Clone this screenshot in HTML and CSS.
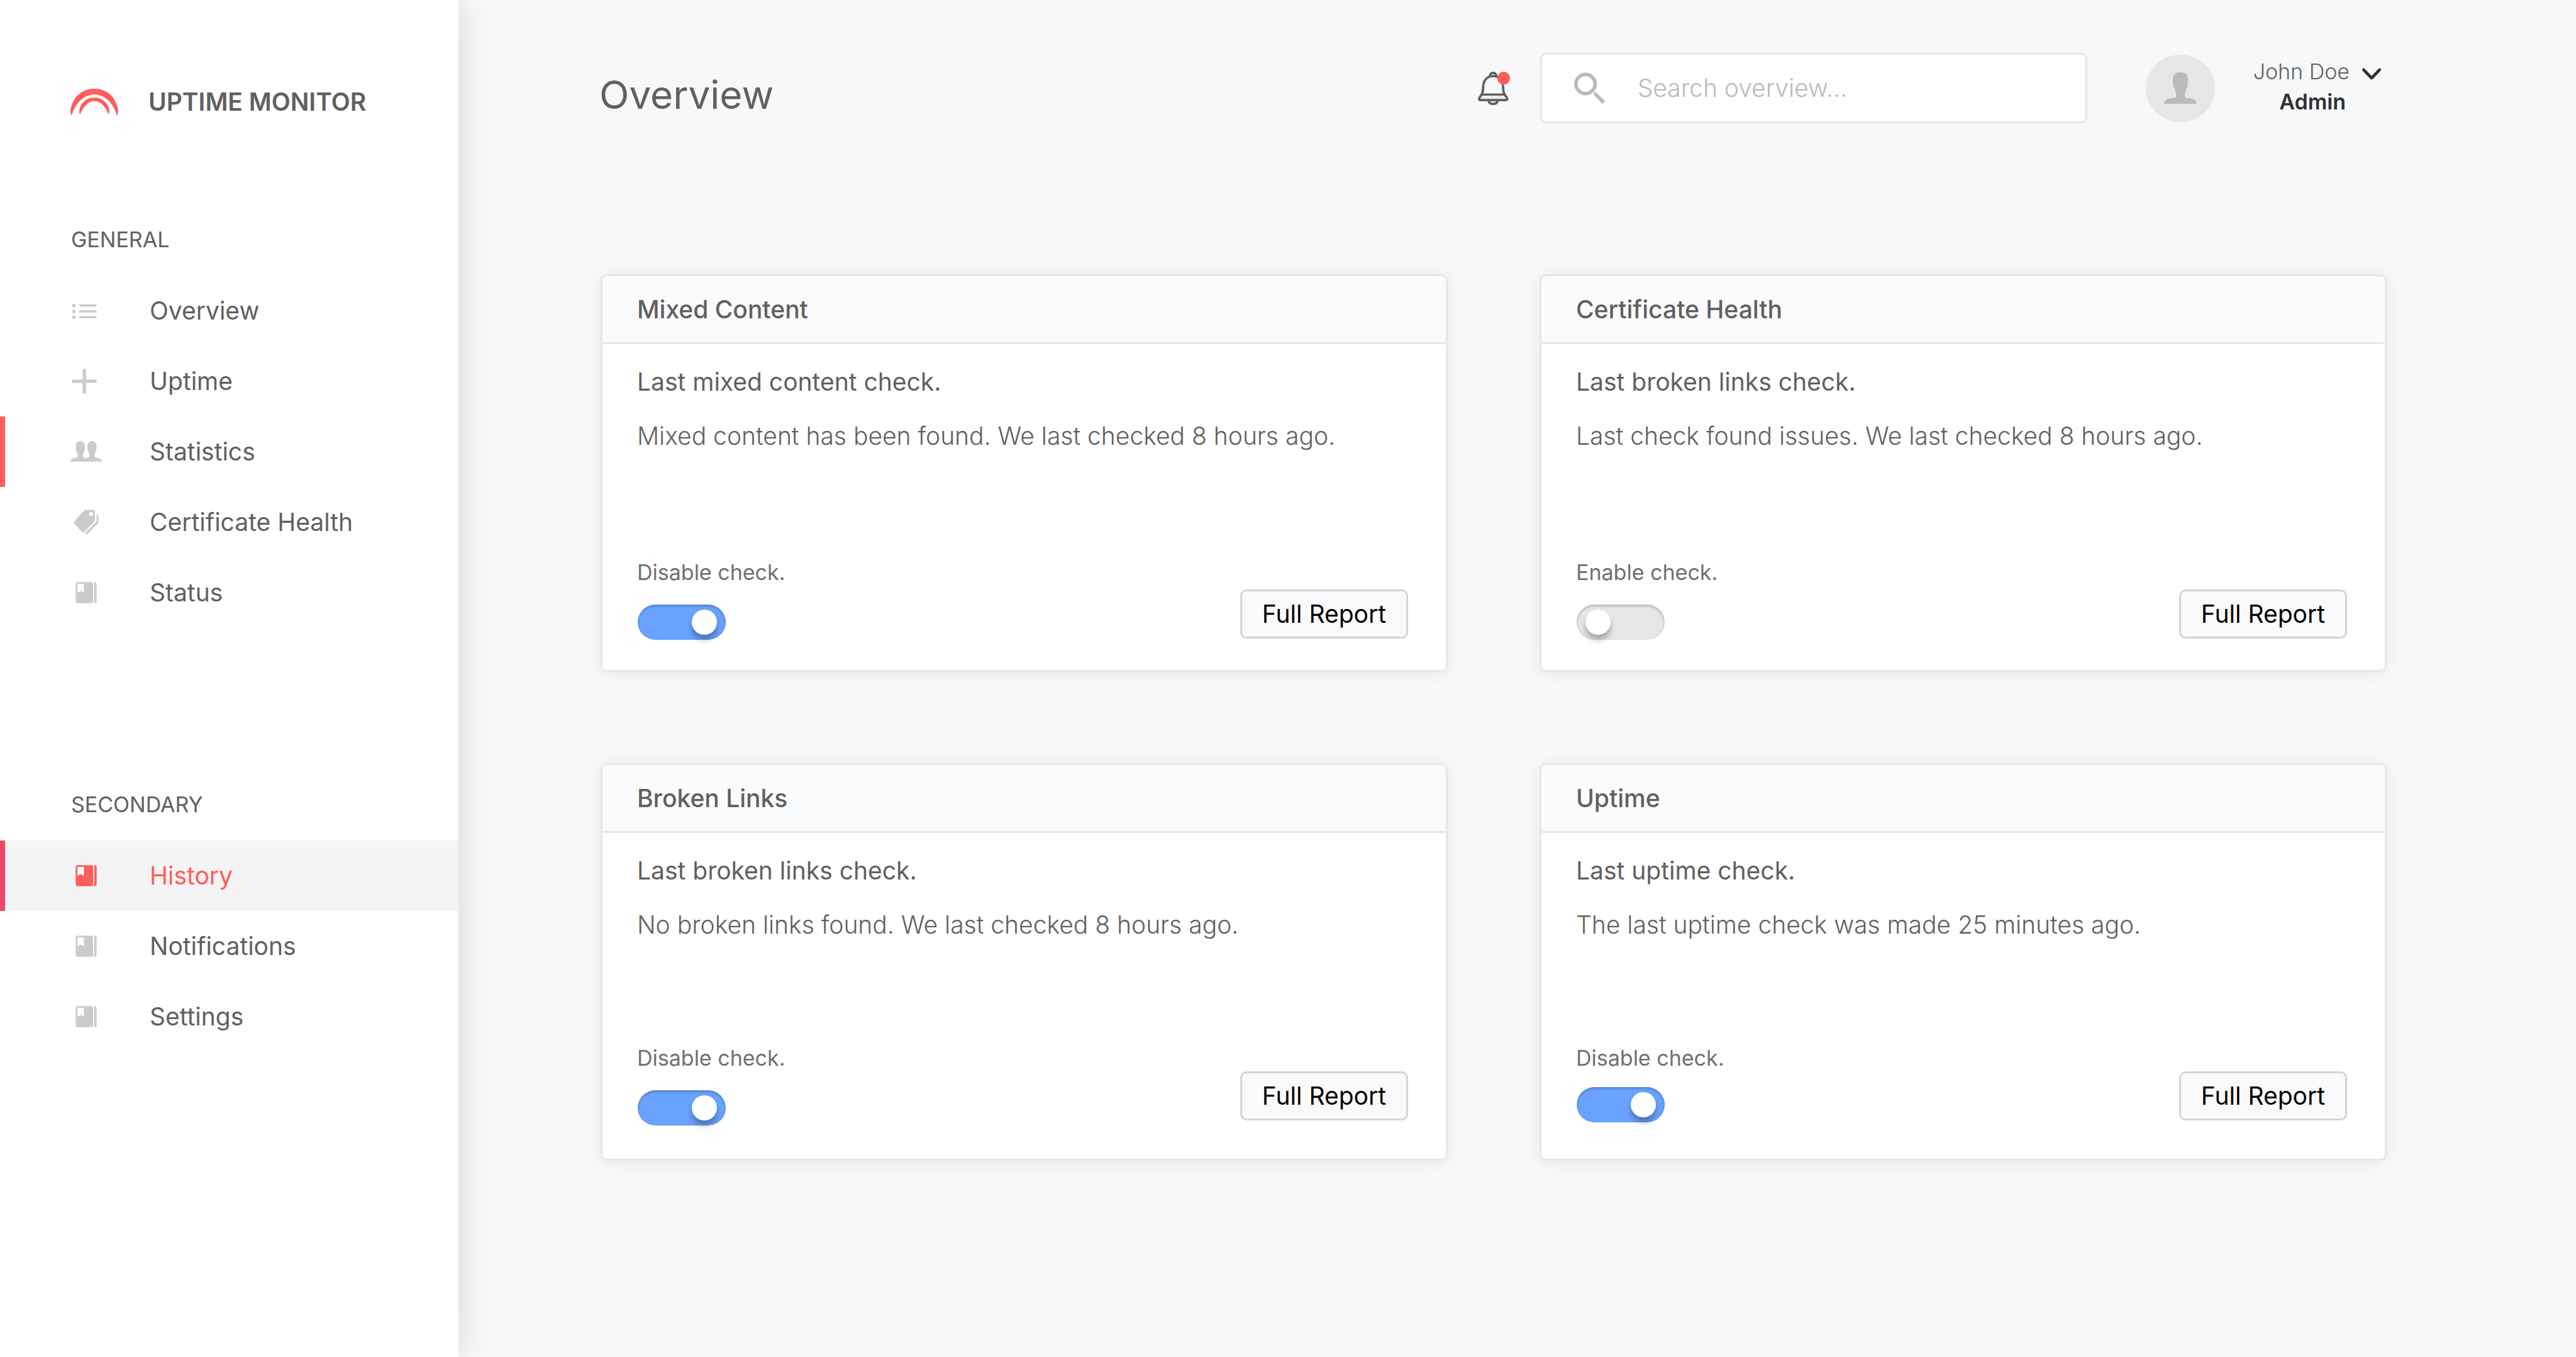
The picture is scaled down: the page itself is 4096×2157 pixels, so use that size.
FILE: index.html
```html
<!DOCTYPE html>
<html lang="en">
<head>
<meta charset="utf-8">
<meta name="viewport" content="width=device-width, initial-scale=1">
<title>Uptime Monitor – Overview</title>
<link rel="stylesheet" href="styles.css">
</head>
<body>
<svg class="sprite" aria-hidden="true">
  <symbol id="icon-list" viewBox="0 0 54 54">
    <rect x="3" y="15" width="6" height="6" rx="2"/><rect x="15" y="16" width="30" height="4" rx="2"/>
    <rect x="3" y="25" width="6" height="6" rx="2"/><rect x="15" y="26" width="30" height="4" rx="2"/>
    <rect x="3" y="35" width="6" height="6" rx="2"/><rect x="15" y="36" width="30" height="4" rx="2"/>
  </symbol>
  <symbol id="icon-plus" viewBox="0 0 54 54">
    <path d="M21 6h6v18h18v6H27v18h-6V30H3v-6h18z"/>
  </symbol>
  <symbol id="icon-people" viewBox="0 0 54 54">
    <path d="M0 44C0 39 5 38 9 37.500C12 37 13 36 13 34L12.500 32C11 29 10.500 26 10 24C9 23.500 8.800 21 9.300 20C8.500 13 11 9 17 9C23 9 25.500 13 24.700 20C25.200 21 25 23.500 24 24C23.500 27 22.500 29 21.500 31V34C21.500 36.500 24 38 27 38C30 38 32.500 36.500 32.500 34V31C31.500 29 30.500 27 30 24C29 23.500 28.800 21 29.300 20C28.500 13 31 9 37 9C43 9 45.500 13 44.700 20C45.200 21 45 23.500 44 24C43.500 27 43 29 41.500 32L41 34C41 36 42 37 45 37.500C49 38 54 39 54 44Z"/>
  </symbol>
  <symbol id="icon-tags" viewBox="0 0 54 54">
    <path fill-rule="evenodd" d="M24.300 6H39Q42 6 42 9V25L23.500 44Q21.700 45.500 20 44L6.800 29.800Q5.300 27.700 6.800 25.600ZM35.300 9.700a3.300 3.300 0 1 0 0 6.600a3.300 3.300 0 1 0 0-6.600Z"/>
    <path d="M45 12.300L47.200 14.500Q48 15.300 48 16.500V28.300L30 46.800Q28 48.600 26 47.800L24.300 46.500L45 25.700Z"/>
  </symbol>
  <symbol id="icon-book" viewBox="0 0 54 54">
    <path d="M13 9H35.500Q39 9 39 13V41Q39 45 35.500 45H13Q9 45 9 41V13Q9 9 13 9Z"/>
    <path d="M39.500 9H41Q45 9 45 13V41Q45 45 41 45H39.500Q41 43.500 41 41V13Q41 10.500 39.500 9Z"/>
    <path fill="#fff" d="M12 12H23V27L17.500 24L12 27Z"/>
  </symbol>
</svg>

<div class="app">
  <aside class="sidebar">
    <a class="brand" href="#">
      <svg class="brand-logo" viewBox="0 0 81 46" aria-hidden="true">
        <path d="M2 45.500C.5 45 0 40 0 37C3 14 20 0 40.500 0C61 0 78 14 81 37C81 40 80.500 45 79 45.500C72 22 56 10 40.500 10C25 10 9 22 2 45.500Z"/>
        <path d="M16 43.500C15 43 15 39 15 36C18 23 28 15 40.500 15C53 15 63 23 66 36C66 39 66 43 65 43.500C58 28 50 21 40.500 21C31 21 23 28 16 43.500Z"/>
      </svg>
      <span>UPTIME MONITOR</span>
    </a>

    <nav class="nav" aria-labelledby="nav-general">
      <h2 class="nav-title" id="nav-general">GENERAL</h2>
      <a class="nav-link" href="#"><svg class="nav-icon" aria-hidden="true"><use href="#icon-list"/></svg>Overview</a>
      <a class="nav-link" href="#"><svg class="nav-icon" aria-hidden="true"><use href="#icon-plus"/></svg>Uptime</a>
      <a class="nav-link nav-link--marked" href="#"><svg class="nav-icon" aria-hidden="true"><use href="#icon-people"/></svg>Statistics</a>
      <a class="nav-link" href="#"><svg class="nav-icon" aria-hidden="true"><use href="#icon-tags"/></svg>Certificate Health</a>
      <a class="nav-link" href="#"><svg class="nav-icon" aria-hidden="true"><use href="#icon-book"/></svg>Status</a>
    </nav>

    <nav class="nav" aria-labelledby="nav-secondary">
      <h2 class="nav-title" id="nav-secondary">SECONDARY</h2>
      <a class="nav-link nav-link--active" href="#"><svg class="nav-icon" aria-hidden="true"><use href="#icon-book"/></svg>History</a>
      <a class="nav-link" href="#"><svg class="nav-icon" aria-hidden="true"><use href="#icon-book"/></svg>Notifications</a>
      <a class="nav-link" href="#"><svg class="nav-icon" aria-hidden="true"><use href="#icon-book"/></svg>Settings</a>
    </nav>
  </aside>

  <main class="main">
    <header class="topbar">
      <h1 class="page-title">Overview</h1>
      <button class="bell" type="button" aria-label="Notifications">
        <svg class="bell-icon" viewBox="0 0 56 57" aria-hidden="true">
          <path class="bell-band" d="M7 39H45L49 47H3Z"/>
          <g class="bell-lines">
            <path d="M20.500 7.500C20.500 0 31.500 0 31.500 7.500"/>
            <path d="M26 7.500C16 7.500 9.500 14.500 9 25C8.800 34 8 38 2.500 44.500C1 46.500 2 48.500 4 48.500H48C50 48.500 51 46.500 49.500 44.500C44 38 43.200 34 43 25C42.500 14.500 36 7.500 26 7.500Z"/>
            <path d="M7 39H45M18.500 50.500C20 56.500 32 56.500 33.500 50.500"/>
          </g>
          <circle class="bell-dot" cx="44" cy="11" r="11"/>
        </svg>
      </button>
      <label class="search">
        <svg class="search-icon" viewBox="0 0 54 54" aria-hidden="true">
          <circle cx="19.500" cy="20" r="16.500" fill="none" stroke="currentColor" stroke-width="6"/>
          <path fill="currentColor" d="M33.500 36.500Q33 34 37 33.700L53 49.500L48.700 54L33.700 38.700Z"/>
        </svg>
        <input class="search-input" type="search" placeholder="Search overview..." aria-label="Search overview">
      </label>
      <div class="avatar">
        <svg class="avatar-icon" viewBox="0 0 56 54" aria-hidden="true">
          <path d="M0 54C0 47 8 44.500 15 44C19 43.500 20.500 43 20.500 41V35C19 33 18 30 18 27C16 26.500 15 22 15.500 19C14.500 8 15 0 28 0C41 0 41.500 8 40.500 19C41.500 22 40 26.500 38.500 27C38 30 37 33 35.500 35V41C35.500 43 37 43.500 41 44C48 44.500 56 47 56 54Z"/>
        </svg>
      </div>
      <button class="user" type="button">
        <span class="user-name">John Doe</span>
        <svg class="user-chevron" viewBox="0 0 32 20" aria-hidden="true"><path d="M2.500 3L16 17L29.500 3"/></svg>
        <span class="user-role">Admin</span>
      </button>
    </header>

    <div class="cards">
      <section class="card">
        <h2 class="card-title">Mixed Content</h2>
        <div class="card-body">
          <h3 class="card-lead">Last mixed content check.</h3>
          <p class="card-text">Mixed content has been found. We last checked 8 hours ago.</p>
          <div class="card-foot">
            <div class="field">
              <label class="field-label" for="mixed">Disable check.</label>
              <input class="switch" id="mixed" type="checkbox" role="switch" checked>
            </div>
            <button class="report" type="button">Full Report</button>
          </div>
        </div>
      </section>

      <section class="card">
        <h2 class="card-title">Certificate Health</h2>
        <div class="card-body">
          <h3 class="card-lead">Last broken links check.</h3>
          <p class="card-text">Last check found issues. We last checked 8 hours ago.</p>
          <div class="card-foot">
            <div class="field">
              <label class="field-label" for="certificate">Enable check.</label>
              <input class="switch" id="certificate" type="checkbox" role="switch">
            </div>
            <button class="report" type="button">Full Report</button>
          </div>
        </div>
      </section>

      <section class="card card--raised">
        <h2 class="card-title">Broken Links</h2>
        <div class="card-body">
          <h3 class="card-lead">Last broken links check.</h3>
          <p class="card-text">No broken links found. We last checked 8 hours ago.</p>
          <div class="card-foot">
            <div class="field">
              <label class="field-label" for="links">Disable check.</label>
              <input class="switch" id="links" type="checkbox" role="switch" checked>
            </div>
            <button class="report" type="button">Full Report</button>
          </div>
        </div>
      </section>

      <section class="card card--raised">
        <h2 class="card-title">Uptime</h2>
        <div class="card-body">
          <h3 class="card-lead">Last uptime check.</h3>
          <p class="card-text">The last uptime check was made 25 minutes ago.</p>
          <div class="card-foot">
            <div class="field field--tight">
              <label class="field-label" for="uptime">Disable check.</label>
              <input class="switch" id="uptime" type="checkbox" role="switch" checked>
            </div>
            <button class="report" type="button">Full Report</button>
          </div>
        </div>
      </section>
    </div>
  </main>
</div>
</body>
</html>
```
FILE: styles.css
```css
:root {
  --text: #606060;
  --ink: #303030;
  --line: #e7e7e8;
  --icon: #cbcbcb;
  --red: #ff5c5c;
  --blue: #69a3ff;
  --page: #f7f8fa;
}

* {
  box-sizing: border-box;
}

body {
  margin: 0;
  background: var(--page);
  color: var(--text);
  font-family: Inter, "Liberation Sans", sans-serif;
  font-size: 39px;
  line-height: 56px;
}

h1, h2, h3, p {
  margin: 0;
  font-weight: 400;
}

button, input {
  font: inherit;
  color: inherit;
}

button {
  padding: 0;
  border: 0;
  background: none;
  cursor: pointer;
}

a {
  color: inherit;
  text-decoration: none;
}

svg {
  display: block;
  flex: none;
}

.sprite {
  position: absolute;
  width: 0;
  height: 0;
}

.app {
  display: flex;
  min-height: 100vh;
}

/* Sidebar */

.sidebar {
  flex: 0 0 729px;
  padding-top: 134px;
  background: #fff;
  box-shadow: 0 0 56px rgba(0, 0, 0, 0.14);
}

.brand {
  display: flex;
  align-items: center;
  gap: 48px;
  margin-bottom: 170px;
  padding-left: 112px;
  font-weight: 600;
}

.brand-logo {
  width: 76px;
  height: 43px;
  fill: var(--red);
}

.nav {
  margin-bottom: 260px;
}

.nav-title {
  margin-bottom: 36px;
  padding-left: 113px;
  font-size: 34px;
  line-height: 42px;
  font-weight: 400;
}

.nav-link {
  display: flex;
  align-items: center;
  gap: 76px;
  height: 112px;
  padding-left: 104px;
  border-left: 8px solid transparent;
}

.nav-icon {
  width: 50px;
  height: 50px;
  fill: var(--icon);
}

.nav-link--marked {
  border-color: var(--red);
}

.nav-link--active {
  border-color: #f04468;
  background: #f4f4f4;
  color: var(--red);
}

.nav-link--active .nav-icon {
  fill: var(--red);
}

/* Top bar */

.main {
  flex: 1;
  min-width: 0;
  padding: 84px 301px 84px 226px;
}

.topbar {
  display: flex;
  align-items: center;
  min-height: 112px;
  margin: 0 9px 240px -2px;
}

.page-title {
  margin-right: auto;
  padding-top: 22px;
  font-size: 62px;
  line-height: 72px;
}

.bell {
  margin-right: 47px;
}

.bell-icon {
  width: 52px;
  height: 53px;
}

.bell-lines {
  fill: none;
  stroke: var(--text);
  stroke-width: 4;
  stroke-linecap: round;
}

.bell-band {
  fill: #ececee;
}

.bell-dot {
  fill: var(--red);
}

.search {
  display: flex;
  align-items: center;
  gap: 51px;
  width: 870px;
  height: 112px;
  margin-right: 93px;
  padding: 0 51px;
  border: 3px solid var(--line);
  border-radius: 10px;
  background: #fff;
}

.search-icon {
  width: 50px;
  height: 50px;
  color: #bababa;
}

.search-input {
  flex: 1;
  min-width: 0;
  padding: 0;
  border: 0;
  outline: 0;
  background: none;
  font-weight: 300;
}

.search-input::placeholder {
  color: #bababa;
  opacity: 1;
}

.avatar {
  display: grid;
  place-items: center;
  width: 110px;
  height: 107px;
  margin-right: 61px;
  border-radius: 50%;
  background: #e6e6e6;
}

.avatar-icon {
  width: 52px;
  height: 50px;
  fill: #bababa;
}

.user {
  display: grid;
  grid-template-columns: auto 30px;
  align-items: center;
  column-gap: 20px;
  padding-bottom: 4px;
  font-size: 34px;
  line-height: 48px;
}

.user-name {
  font-weight: 300;
}

.user-chevron {
  width: 30px;
  height: 19px;
  margin-top: 6px;
  fill: none;
  stroke: var(--ink);
  stroke-width: 5;
  stroke-linecap: round;
  stroke-linejoin: round;
}

.user-role {
  padding-right: 6px;
  color: var(--ink);
  font-weight: 600;
  text-align: right;
}

/* Cards */

.cards {
  display: grid;
  grid-template-columns: 1fr 1fr;
  gap: 145px 146px;
}

.card {
  border: 3px solid var(--line);
  border-radius: 10px;
  background: #fff;
  box-shadow: 0 3px 24px rgba(0, 0, 0, 0.07);
}

.card-title {
  height: 108px;
  padding: 0 55px;
  border-bottom: 3px solid var(--line);
  border-radius: 8px 8px 0 0;
  background: #fafbfd;
  font-size: 39px;
  line-height: 105px;
  font-weight: 500;
}

.card-body {
  padding: 32px 60px 48px 55px;
}

.card-lead {
  margin-bottom: 30px;
  font-size: 39px;
}

.card-text {
  margin-bottom: 168px;
  font-weight: 300;
}

.card-foot {
  display: flex;
  align-items: flex-start;
  justify-content: space-between;
}

.field {
  display: flex;
  flex-direction: column;
  gap: 30px;
}

.field--tight {
  gap: 25px;
}

.field-label {
  color: #707070;
  font-size: 34px;
  line-height: 42px;
}

.switch {
  appearance: none;
  width: 140px;
  height: 56px;
  margin: 0 0 0 1px;
  padding: 8px 14px;
  border-radius: 28px;
  background: #e6e6e6;
  box-shadow: inset 0 2px 4px rgba(0, 0, 0, 0.25);
  cursor: pointer;
}

.switch::before {
  content: "";
  display: block;
  width: 40px;
  height: 40px;
  border-radius: 50%;
  background: #fff;
  box-shadow: 0 8px 8px rgba(0, 0, 0, 0.28);
}

.switch:checked {
  background: var(--blue);
}

.switch:checked::before {
  margin-left: auto;
}

.report {
  height: 78px;
  margin-top: 48px;
  padding: 0 32px;
  border: 3px solid #d2d4d7;
  border-radius: 10px;
  background: #f9fafc;
  color: #000;
}

/* Second row: the controls sit closer to the text */

.card--raised .card-body {
  padding-bottom: 53px;
}

.card--raised .card-text {
  margin-bottom: 163px;
}

.card--raised .report {
  margin-top: 42px;
}
```
